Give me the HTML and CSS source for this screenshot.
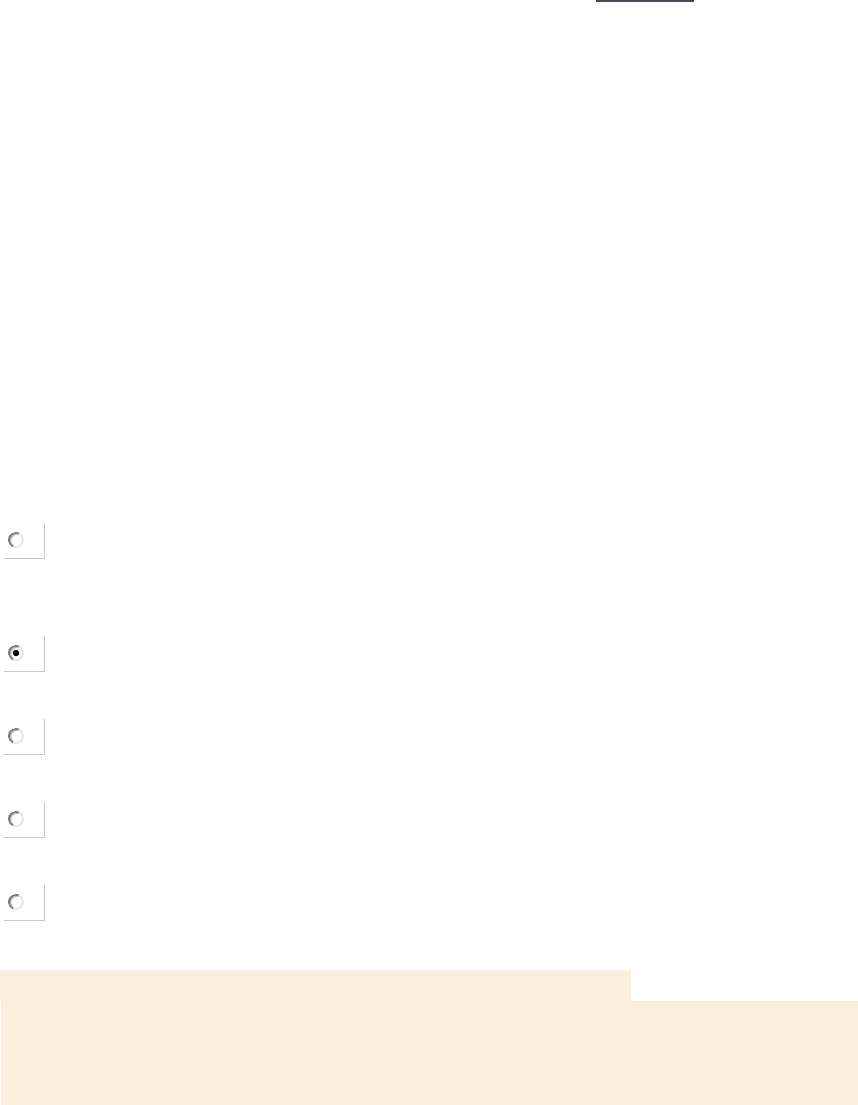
FILE: index.html
```html
<!DOCTYPE html>
<html lang="en">
<head>
  <meta charset="UTF-8" />
  <meta name="viewport" content="width=device-width, initial-scale=1.0"/>
  <title>Options</title>
  <link rel="stylesheet" href="styles.css">
</head>
<body>
  <div class="topbar"><span class="tab-line"></span></div>

  <form class="options">
    <label class="opt first"><input type="radio" name="opt" value="1"></label>
    <label class="opt second"><input type="radio" name="opt" value="2" checked></label>
    <label class="opt"><input type="radio" name="opt" value="3"></label>
    <label class="opt"><input type="radio" name="opt" value="4"></label>
    <label class="opt"><input type="radio" name="opt" value="5"></label>
  </form>

  <footer>
    <div class="foot-tab"></div>
    <div class="foot-body"></div>
  </footer>
</body>
</html>
```

FILE: styles.css
```css
body { margin: 0; background: #fff; font-family: "Liberation Sans", Arial, sans-serif; }

.topbar { height: 523px; }
.tab-line { display: block; width: 98px; height: 2px; margin-left: 596px; background: #444c57; }

.options { display: flex; flex-direction: column; gap: 47px; }
.opt {
  display: block;
  box-sizing: border-box;
  width: 41px;
  height: 36px;
  margin-left: 4px;
  padding: 9px 0 0 4px;
  border-right: 1px solid #c9c9c9;
  border-bottom: 1px solid #c9c9c9;
}
.opt.first { margin-bottom: 30px; }

.opt input {
  appearance: none;
  -webkit-appearance: none;
  margin: 0;
  display: block;
  box-sizing: border-box;
  width: 16px;
  height: 16px;
  border-radius: 50%;
  border: 2px solid;
  border-color: #7c7c7c #e6e6e6 #e6e6e6 #7c7c7c;
  box-shadow: inset 1px 1px 0 #b0b0b0;
  background: #fff;
  transform: rotate(-20deg);
  position: relative;
}
.opt input:checked::after {
  content: "";
  position: absolute;
  left: 3px;
  top: 3px;
  width: 6px;
  height: 6px;
  border-radius: 50%;
  background: #000;
  box-shadow: 0 0 1px #444;
}

footer { margin-top: 49px; }
.foot-tab { width: 631px; height: 31px; background: #fbeedc; }
.foot-body { height: 104px; margin-left: 1px; background: #fbeedc; }
```
